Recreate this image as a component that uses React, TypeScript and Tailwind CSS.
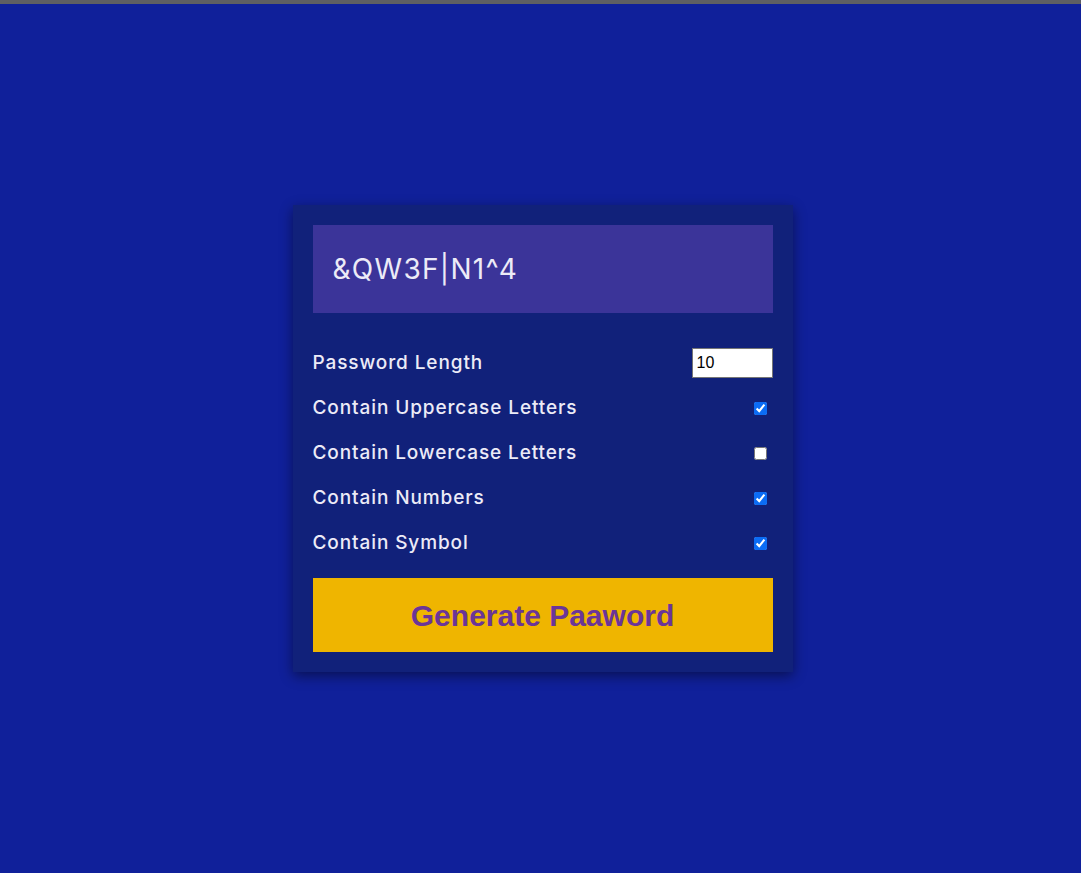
import React from "react";

const rows: { label: string; checked: boolean }[] = [
  { label: "Contain Uppercase Letters", checked: true },
  { label: "Contain Lowercase Letters", checked: false },
  { label: "Contain Numbers", checked: true },
  { label: "Contain Symbol", checked: true },
];

export default function App() {
  return (
    <div className="min-h-[873px] bg-[#10209a] border-t-4 border-[#5f5f63] flex items-center justify-center pl-1" style={{ fontFamily: "Inter, 'Noto Sans', sans-serif" }}>
      <div className="w-[500px] bg-[#11217a] p-5 shadow-[0_4px_12px_rgba(0,0,0,0.45)]">
        <div className="h-[88px] bg-[#3b3499] flex items-center px-5 text-[28px] tracking-[1.3px] text-[#ecebf7]">
          &amp;QW3F|N1^4
        </div>
        <div className="mt-[35px] flex flex-col gap-[15px] text-[#ecebf7] text-[19px] font-medium tracking-[0.9px]">
          <div className="h-[30px] flex items-center justify-between">
            <span>Password Length</span>
            <input type="number" defaultValue={10} className="w-[81px] h-[30px] bg-white text-black text-[16px] font-normal tracking-normal px-1 border border-[#767676] outline-none" style={{ fontFamily: "Arial, 'Liberation Sans', sans-serif" }} />
          </div>
          {rows.map((r) => (
            <div key={r.label} className="h-[30px] flex items-center justify-between">
              <span>{r.label}</span>
              <input type="checkbox" defaultChecked={r.checked} className="w-[13px] h-[13px] mr-[6px] accent-[#0b6cf5]" />
            </div>
          ))}
        </div>
        <button className="mt-5 w-full h-[74px] bg-[#efb500] text-[#6b3598] font-bold text-[30px]" style={{ fontFamily: "Arial, 'Liberation Sans', sans-serif" }}>
          Generate Paaword
        </button>
      </div>
    </div>
  );
}
